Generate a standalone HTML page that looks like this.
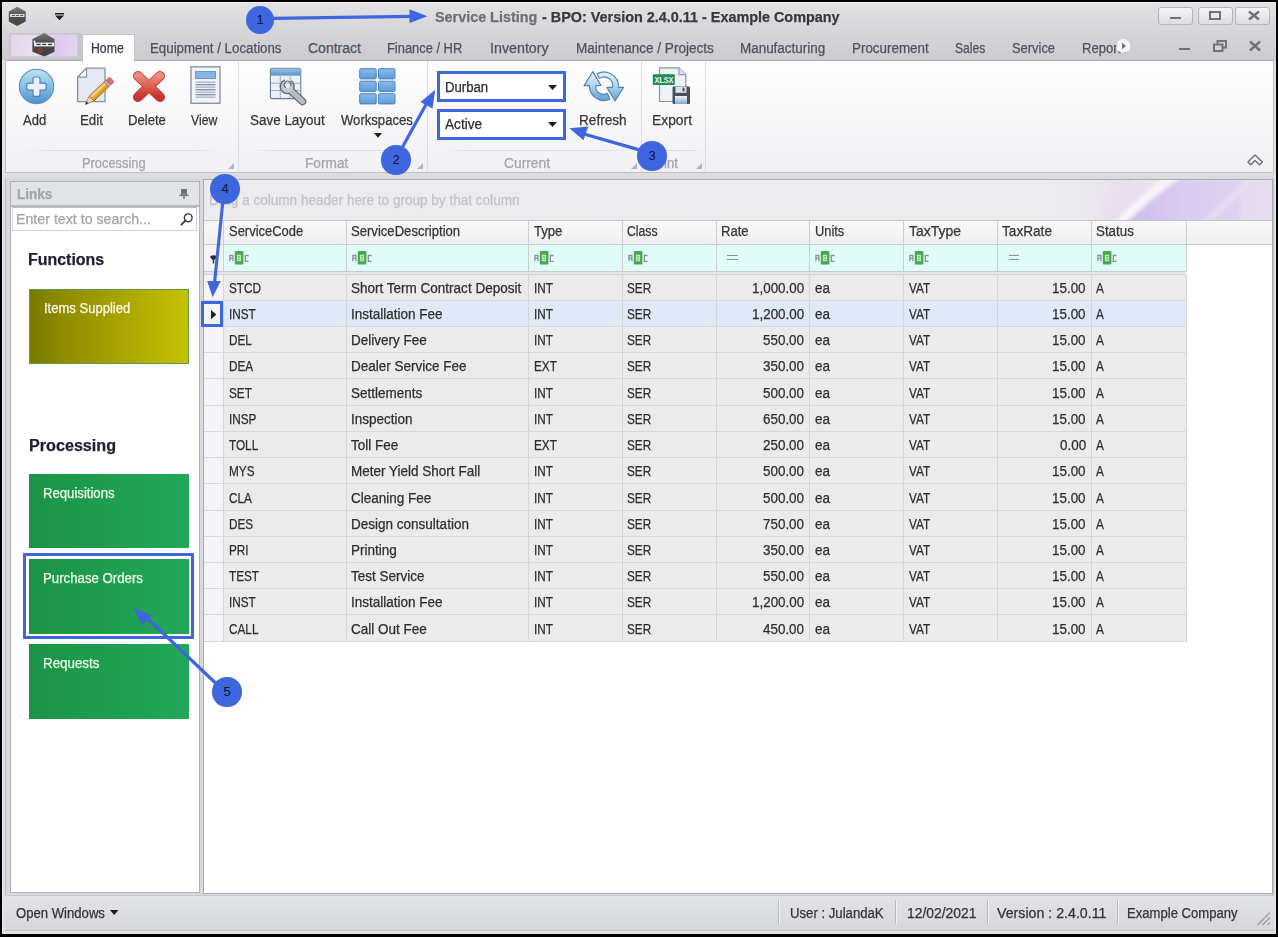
<!DOCTYPE html>
<html><head><meta charset="utf-8">
<style>
*{margin:0;padding:0;box-sizing:border-box}
html,body{width:1278px;height:937px;overflow:hidden;background:#000;font-family:"Liberation Sans",sans-serif;color:#222}
body{position:relative}
.a{position:absolute}
.t{position:absolute;white-space:nowrap;line-height:1;-webkit-text-stroke:0.25px currentColor}
svg{position:absolute;overflow:visible}
.circ{position:absolute;width:29.5px;height:29.5px;border-radius:50%;background:#3e66de;color:#0c0f2e;font-size:13px;text-align:center;line-height:29.5px}
</style></head><body>

<div class="a" style="left:2px;top:2px;width:1274px;height:932px;background:#e1e2e6"></div>
<div class="a" style="left:2px;top:2px;width:1274px;height:1px;background:#eeeef0"></div>
<div class="a" style="left:2px;top:3px;width:1274px;height:57px;background:linear-gradient(#e2e2e5,#d6d6da 50%,#cbcbcf)"></div>
<div class="t" style="left:434.50px;top:9.00px;font-size:15px;font-weight:bold;color:#6d7076;transform:scaleX(0.9579);transform-origin:0 0;">Service Listing</div>
<div class="t" style="left:542.20px;top:9.00px;font-size:15px;font-weight:bold;color:#363944;transform:scaleX(0.9595);transform-origin:0 0;">- BPO: Version 2.4.0.11 - Example Company</div>
<svg style="left:6px;top:4px" width="24" height="26" viewBox="6 4 24 26"><defs><linearGradient id="ghx2" x1="0" y1="0" x2="0" y2="1"><stop offset="0" stop-color="#808082"/><stop offset=".45" stop-color="#505052"/><stop offset="1" stop-color="#434446"/></linearGradient></defs>
<polygon points="17.2,6.7 25.7,11.5 25.7,21.5 17.2,26 8.8,21.5 8.8,11.5" fill="url(#ghx2)"/>
<rect x="10" y="14" width="14.5" height="3" fill="#d8d8d8"/><rect x="12" y="15" width="3" height="1" fill="#555"/><rect x="16" y="15" width="3" height="1" fill="#555"/><rect x="20.2" y="15" width="3" height="1" fill="#555"/>
<rect x="14" y="19" width="4" height="4" fill="#7a3434" opacity=".8"/></svg>
<svg style="left:55px;top:12.5px" width="9" height="8" viewBox="0 0 9 8"><rect x="0" y="0" width="9" height="1.5" fill="#222"/><polygon points="0,2.5 9,2.5 4.5,7.2" fill="#222"/></svg>
<div class="a" style="left:1158px;top:7px;width:35px;height:18px;border:1px solid #b3b5bb;border-radius:3px;background:linear-gradient(#f4f4f6,#dcdde1)"></div>
<div class="a" style="left:1197.5px;top:7px;width:35px;height:18px;border:1px solid #b3b5bb;border-radius:3px;background:linear-gradient(#f4f4f6,#dcdde1)"></div>
<div class="a" style="left:1235px;top:7px;width:35px;height:18px;border:1px solid #b3b5bb;border-radius:3px;background:linear-gradient(#f4f4f6,#dcdde1)"></div>
<div class="a" style="left:1170px;top:17px;width:11px;height:2px;background:#71737a"></div>
<div class="a" style="left:1209px;top:11px;width:12px;height:9px;border:2px solid #71737a;border-top-width:2.5px"></div>
<svg style="left:1247.5px;top:11px" width="12" height="9" viewBox="0 0 12 9"><path d="M1 0.5 L11 8.5 M11 0.5 L1 8.5" stroke="#71737a" stroke-width="2.4"/></svg>
<div class="a" style="left:9px;top:33px;width:73px;height:27px;background:#c6c7cd"></div>
<div class="a" style="left:10px;top:33.5px;width:68px;height:23px;background:linear-gradient(100deg,#e2d6ee,#ecdff2 40%,#e0c8ee 70%,#e6d6f0);border:1px solid #cfc6d8"></div>
<svg style="left:26px;top:30px" width="36" height="30" viewBox="26 30 36 30"><defs><linearGradient id="ghx" x1="0" y1="0" x2="0" y2="1"><stop offset="0" stop-color="#7a7a7c"/><stop offset=".4" stop-color="#4c4c4e"/><stop offset="1" stop-color="#3e3f41"/></linearGradient></defs>
<polygon points="44.4,33 54.5,39 54.5,51.8 44.4,56.6 32.4,51.8 32.4,39" fill="url(#ghx)"/>
<rect x="34" y="42.6" width="20" height="3.8" fill="#f2f2f2"/><rect x="36.5" y="43.8" width="4" height="1.3" fill="#3a3a3a"/><rect x="42.2" y="43.8" width="4" height="1.3" fill="#3a3a3a"/><rect x="48" y="43.8" width="4" height="1.3" fill="#3a3a3a"/><rect x="33.8" y="40.6" width="1.4" height="3" fill="#f2f2f2"/>
<rect x="38" y="48" width="5" height="5" fill="#8a3838" opacity=".85"/></svg>
<div class="t" style="left:150.40px;top:41.05px;font-size:14px;font-weight:normal;color:#4d5261;transform:scaleX(0.9493);transform-origin:0 0;">Equipment / Locations</div>
<div class="t" style="left:308.00px;top:41.05px;font-size:14px;font-weight:normal;color:#4d5261;transform:scaleX(1.0000);transform-origin:0 0;">Contract</div>
<div class="t" style="left:387.00px;top:41.05px;font-size:14px;font-weight:normal;color:#4d5261;transform:scaleX(0.9207);transform-origin:0 0;">Finance / HR</div>
<div class="t" style="left:489.90px;top:41.05px;font-size:14px;font-weight:normal;color:#4d5261;transform:scaleX(1.0190);transform-origin:0 0;">Inventory</div>
<div class="t" style="left:575.80px;top:41.05px;font-size:14px;font-weight:normal;color:#4d5261;transform:scaleX(0.9676);transform-origin:0 0;">Maintenance / Projects</div>
<div class="t" style="left:739.90px;top:41.05px;font-size:14px;font-weight:normal;color:#4d5261;transform:scaleX(0.9596);transform-origin:0 0;">Manufacturing</div>
<div class="t" style="left:852.20px;top:41.05px;font-size:14px;font-weight:normal;color:#4d5261;transform:scaleX(0.9575);transform-origin:0 0;">Procurement</div>
<div class="t" style="left:955.10px;top:41.05px;font-size:14px;font-weight:normal;color:#4d5261;transform:scaleX(0.8629);transform-origin:0 0;">Sales</div>
<div class="t" style="left:1012.00px;top:41.05px;font-size:14px;font-weight:normal;color:#4d5261;transform:scaleX(0.9213);transform-origin:0 0;">Service</div>
<div class="a" style="left:1075px;top:33px;width:58px;height:26px;overflow:hidden"><div class="t" style="left:7.30px;top:8.05px;font-size:14px;font-weight:normal;color:#4d5261;transform:scaleX(0.9300);transform-origin:0 0;">Reports</div></div>
<svg style="left:1116px;top:39px" width="15" height="15" viewBox="0 0 15 15"><circle cx="7.4" cy="7" r="7" fill="#f6f6f8"/><polygon points="6,3.6 10,7 6,10.4" fill="#74767c"/></svg>
<div class="a" style="left:1179px;top:48px;width:11px;height:2.2px;background:#71737a"></div>
<svg style="left:1213px;top:40px" width="14" height="12" viewBox="0 0 14 12"><rect x="4.5" y="1" width="8.5" height="6.5" fill="none" stroke="#71737a" stroke-width="2"/><rect x="1" y="4.5" width="8.5" height="6.5" fill="#d0d1d7" stroke="#71737a" stroke-width="2"/></svg>
<svg style="left:1249px;top:41px" width="12" height="10" viewBox="0 0 12 10"><path d="M1 0.5 L11 9.5 M11 0.5 L1 9.5" stroke="#71737a" stroke-width="2.4"/></svg>
<div class="a" style="left:5px;top:60px;width:1268.5px;height:113px;background:linear-gradient(#fefefe,#f6f6f8 60%,#f1f1f3);border:1px solid #bfc0c6;border-top-color:#a9abb1"></div>
<div class="a" style="left:82px;top:33.5px;width:53px;height:28px;background:linear-gradient(#fdfdfd,#fefefe);border:1px solid #c3c4ca;border-bottom:none"></div>
<div class="t" style="left:90.60px;top:41.05px;font-size:14px;font-weight:normal;color:#353a48;transform:scaleX(0.8763);transform-origin:0 0;">Home</div>
<div class="a" style="left:237.8px;top:61px;width:1px;height:111px;background:#dddee2"></div>
<div class="a" style="left:426.8px;top:61px;width:1px;height:111px;background:#dddee2"></div>
<div class="a" style="left:640.7px;top:61px;width:1px;height:111px;background:#dddee2"></div>
<div class="a" style="left:705.4px;top:61px;width:1px;height:111px;background:#dddee2"></div>
<div class="a" style="left:25px;top:150px;width:197px;height:1px;background:linear-gradient(90deg,rgba(220,221,226,0),#dcdde2 15%,#dcdde2 85%,rgba(220,221,226,0))"></div>
<div class="a" style="left:250px;top:150px;width:162px;height:1px;background:linear-gradient(90deg,rgba(220,221,226,0),#dcdde2 15%,#dcdde2 85%,rgba(220,221,226,0))"></div>
<div class="a" style="left:444px;top:150px;width:186px;height:1px;background:linear-gradient(90deg,rgba(220,221,226,0),#dcdde2 15%,#dcdde2 85%,rgba(220,221,226,0))"></div>
<div class="a" style="left:650px;top:150px;width:50px;height:1px;background:linear-gradient(90deg,rgba(220,221,226,0),#dcdde2 15%,#dcdde2 85%,rgba(220,221,226,0))"></div>
<div class="t" style="left:23.40px;top:113.25px;font-size:14px;font-weight:normal;color:#363636;transform:scaleX(0.9320);transform-origin:0 0;">Add</div>
<div class="t" style="left:80.20px;top:113.25px;font-size:14px;font-weight:normal;color:#363636;transform:scaleX(0.9500);transform-origin:0 0;">Edit</div>
<div class="t" style="left:128.30px;top:113.25px;font-size:14px;font-weight:normal;color:#363636;transform:scaleX(0.9366);transform-origin:0 0;">Delete</div>
<div class="t" style="left:190.70px;top:113.25px;font-size:14px;font-weight:normal;color:#363636;transform:scaleX(0.8742);transform-origin:0 0;">View</div>
<div class="t" style="left:249.60px;top:113.25px;font-size:14px;font-weight:normal;color:#363636;transform:scaleX(0.9603);transform-origin:0 0;">Save Layout</div>
<div class="t" style="left:341.30px;top:113.25px;font-size:14px;font-weight:normal;color:#363636;transform:scaleX(0.9351);transform-origin:0 0;">Workspaces</div>
<div class="t" style="left:579.20px;top:113.25px;font-size:14px;font-weight:normal;color:#363636;transform:scaleX(0.9714);transform-origin:0 0;">Refresh</div>
<div class="t" style="left:651.70px;top:113.25px;font-size:14px;font-weight:normal;color:#363636;transform:scaleX(0.9878);transform-origin:0 0;">Export</div>
<div class="t" style="left:81.70px;top:156.15px;font-size:14px;font-weight:normal;color:#a2a4aa;transform:scaleX(0.9188);transform-origin:0 0;">Processing</div>
<div class="t" style="left:304.70px;top:156.15px;font-size:14px;font-weight:normal;color:#a2a4aa;transform:scaleX(0.9773);transform-origin:0 0;">Format</div>
<div class="t" style="left:503.50px;top:156.15px;font-size:14px;font-weight:normal;color:#a2a4aa;transform:scaleX(0.9872);transform-origin:0 0;">Current</div>
<div class="t" style="left:650.50px;top:156.15px;font-size:14px;font-weight:normal;color:#a2a4aa;transform:scaleX(0.9300);transform-origin:0 0;">Print</div>
<svg style="left:228px;top:163px" width="6" height="6"><polygon points="6,0 6,6 0,6" fill="#b3b5ba"/></svg>
<svg style="left:416.5px;top:163px" width="6" height="6"><polygon points="6,0 6,6 0,6" fill="#b3b5ba"/></svg>
<svg style="left:630.5px;top:163px" width="6" height="6"><polygon points="6,0 6,6 0,6" fill="#b3b5ba"/></svg>
<svg style="left:695.5px;top:163px" width="6" height="6"><polygon points="6,0 6,6 0,6" fill="#b3b5ba"/></svg>
<svg style="left:373.5px;top:132.8px" width="8" height="5"><polygon points="0,0 8,0 4,4.7" fill="#1e1e1e"/></svg>
<svg style="left:1240px;top:148px" width="30" height="22" viewBox="1240 148 30 22"><path d="M1248 162 L1255 155 L1262.3 162 L1259.6 164.8 L1255 160.6 L1250.7 164.8 Z" fill="#f6f6f8" stroke="#6a6c72" stroke-width="1.4" stroke-linejoin="round"/></svg>
<svg style="left:18px;top:68px" width="38" height="38" viewBox="0 0 38 38"><defs><linearGradient id="ga" x1="0" y1="0" x2="0" y2="1"><stop offset="0" stop-color="#bfe2f5"/><stop offset=".45" stop-color="#8cc3e8"/><stop offset="1" stop-color="#4f92cd"/></linearGradient></defs>
<circle cx="18.5" cy="18.5" r="17.2" fill="url(#ga)" stroke="#5b8fbf" stroke-width="1.1"/>
<path d="M15 11 Q15 9 17 9 H20 Q22 9 22 11 V15.2 H26.2 Q28.2 15.2 28.2 17.2 V20.2 Q28.2 22.2 26.2 22.2 H22 V26.4 Q22 28.4 20 28.4 H17 Q15 28.4 15 26.4 V22.2 H10.8 Q8.8 22.2 8.8 20.2 V17.2 Q8.8 15.2 10.8 15.2 H15 Z" fill="#eaf3fb" stroke="#4a83bb" stroke-width="1.2"/></svg>
<svg style="left:70px;top:62px" width="50" height="50" viewBox="70 62 50 50"><path d="M86.5 68.2 H105 V101.6 H77.6 V77.2 Z" fill="#e4e9f2" stroke="#8890a4" stroke-width="1.3" stroke-linejoin="round"/><path d="M77.6 77.2 H86.5 V68.2 Z" fill="#f7f9fc" stroke="#8890a4" stroke-width="1.2" stroke-linejoin="round"/>
<g transform="translate(85.2 104.6) rotate(-43.5)"><polygon points="0,0 9,-3.4 9,3.4" fill="#f1d9ac" stroke="#8a7040" stroke-width=".7"/><polygon points="0,0 3.2,-1.2 3.2,1.2" fill="#2a2a2a"/>
<rect x="9" y="-3.4" width="20.5" height="6.8" fill="#eeb040" stroke="#8f6a1c" stroke-width=".8"/><rect x="9.5" y="-2.6" width="20" height="1.8" fill="#f8d684"/><rect x="9.5" y="1.2" width="20" height="1.5" fill="#d38f1e"/>
<rect x="29.5" y="-3.4" width="2.6" height="6.8" fill="#b9bcc2" stroke="#777" stroke-width=".6"/><rect x="32.1" y="-3.4" width="4.6" height="6.8" rx="1.6" fill="#e27272" stroke="#b24c4c" stroke-width=".7"/></g></svg>
<svg style="left:132px;top:70px" width="34" height="33" viewBox="0 0 34 33"><defs><linearGradient id="gd" x1="0" y1="0" x2="0" y2="1"><stop offset="0" stop-color="#ee8a7e"/><stop offset="1" stop-color="#c9312a"/></linearGradient></defs>
<path d="M6 6 L28 27 M28 6 L6 27" stroke="#b93a33" stroke-width="10" stroke-linecap="round"/><path d="M6 6 L28 27 M28 6 L6 27" stroke="url(#gd)" stroke-width="8" stroke-linecap="round"/></svg>
<svg style="left:189.5px;top:66px" width="31" height="38" viewBox="0 0 31 38"><rect x="1" y="0.8" width="29" height="36.5" fill="#f0f3f8" stroke="#8a93a6" stroke-width="1.4"/><rect x="5.5" y="5.5" width="20" height="7" fill="#86b6e2" stroke="#6f98c8" stroke-width="1"/>
<g stroke-width="1.3"><line x1="5.5" y1="16.2" x2="25.5" y2="16.2" stroke="#a9b1c0"/><line x1="5.5" y1="18.7" x2="25.5" y2="18.7" stroke="#7f8aa0"/><line x1="5.5" y1="21.2" x2="25.5" y2="21.2" stroke="#a9b1c0"/><line x1="5.5" y1="23.7" x2="25.5" y2="23.7" stroke="#7f8aa0"/><line x1="5.5" y1="26.2" x2="25.5" y2="26.2" stroke="#a9b1c0"/><line x1="5.5" y1="28.7" x2="25.5" y2="28.7" stroke="#7f8aa0"/><line x1="5.5" y1="31.2" x2="25.5" y2="31.2" stroke="#a9b1c0"/></g></svg>
<svg style="left:264px;top:62px" width="46" height="46" viewBox="264 62 46 46"><defs><linearGradient id="gsl" x1="0" y1="0" x2="0" y2="1"><stop offset="0" stop-color="#8fc0ec"/><stop offset="1" stop-color="#5a94d0"/></linearGradient><linearGradient id="gwr" x1="0" y1="0" x2="1" y2="1"><stop offset="0" stop-color="#e2e6ea"/><stop offset="1" stop-color="#8b949f"/></linearGradient>
<mask id="mwr" maskUnits="userSpaceOnUse" x="264" y="62" width="46" height="46"><rect x="264" y="62" width="46" height="46" fill="#fff"/><circle cx="287.6" cy="84.6" r="3.4" fill="#000"/><polygon points="285.2,84 290.4,84 292.5,76 284.5,76" fill="#000"/></mask></defs>
<rect x="270.4" y="68.2" width="30.4" height="30.4" rx="2" fill="#eaf0f8" stroke="#6f7b92" stroke-width="1.1"/><rect x="271" y="68.8" width="29.2" height="6.8" fill="url(#gsl)"/>
<g stroke="#9aa6bb" stroke-width=".9"><line x1="280.3" y1="69" x2="280.3" y2="98"/><line x1="290.2" y1="69" x2="290.2" y2="98"/><line x1="271" y1="83.2" x2="300" y2="83.2"/><line x1="271" y1="90.5" x2="300" y2="90.5"/></g>
<g mask="url(#mwr)"><line x1="289.5" y1="89.5" x2="302.5" y2="101.5" stroke="#5d646e" stroke-width="7.6" stroke-linecap="round"/><circle cx="287.2" cy="86.6" r="7.6" fill="#5d646e"/>
<line x1="289.5" y1="89.5" x2="302.5" y2="101.5" stroke="#b6bcc4" stroke-width="5.2" stroke-linecap="round"/><circle cx="287.2" cy="86.6" r="6.3" fill="#c4c9d0"/></g>
<circle cx="287.6" cy="84.6" r="3.4" fill="none" stroke="#5d646e" stroke-width="1.1" stroke-dasharray="15 6" transform="rotate(120 287.6 84.6)"/></svg>
<svg style="left:358.5px;top:67.5px" width="38" height="37" viewBox="0 0 38 37"><defs><linearGradient id="gw" x1="0" y1="0" x2="0" y2="1"><stop offset="0" stop-color="#8cbde9"/><stop offset="1" stop-color="#5d9bd6"/></linearGradient></defs><rect x="0.7" y="0.7" width="16.5" height="10.2" rx="1.2" fill="url(#gw)" stroke="#4a82bf" stroke-width="1"/><rect x="0.7" y="13.2" width="16.5" height="10.2" rx="1.2" fill="url(#gw)" stroke="#4a82bf" stroke-width="1"/><rect x="0.7" y="25.7" width="16.5" height="10.2" rx="1.2" fill="url(#gw)" stroke="#4a82bf" stroke-width="1"/><rect x="19.5" y="0.7" width="16.5" height="10.2" rx="1.2" fill="url(#gw)" stroke="#4a82bf" stroke-width="1"/><rect x="19.5" y="13.2" width="16.5" height="10.2" rx="1.2" fill="url(#gw)" stroke="#4a82bf" stroke-width="1"/><rect x="19.5" y="25.7" width="16.5" height="10.2" rx="1.2" fill="url(#gw)" stroke="#4a82bf" stroke-width="1"/></svg>
<svg style="left:578px;top:64px" width="52" height="44" viewBox="578 64 52 44"><defs><linearGradient id="gr" x1="0" y1="0" x2="0" y2="1"><stop offset="0" stop-color="#e2f2fb"/><stop offset=".45" stop-color="#b3d9f1"/><stop offset="1" stop-color="#5d9fd7"/></linearGradient></defs>
<g fill="url(#gr)" stroke="#587fa6" stroke-width="1.1" stroke-linejoin="round">
<path d="M597.1 73.7 A14.5 14.5 0 0 1 618.4 87.4 L623.6 87.4 L615 101 L606.9 87.4 L612.5 87.4 A8.5 8.5 0 0 0 599.6 78.4 Z"/>
<path d="M589.4 85.6 A14.6 14.6 0 0 0 609.9 99.3 L607.3 93.3 A7.8 7.8 0 0 1 595.8 85.6 L600.9 85.4 L592.8 71.6 L584.1 85.6 Z"/></g></svg>
<svg style="left:652px;top:67px" width="40" height="38" viewBox="0 0 40 38"><path d="M7.5 0.8 H27 L33.8 7.6 V34.5 H7.5 Z" fill="#eef1f6" stroke="#8e97a8" stroke-width="1.2"/><path d="M27 0.8 V7.6 H33.8" fill="#dde2ea" stroke="#8e97a8" stroke-width="1.1"/>
<rect x="0.8" y="7.2" width="22" height="10.8" rx="1" fill="#1d8a58"/><text x="11.8" y="15.6" font-size="8.3" font-family="Liberation Mono" font-weight="bold" fill="#e8f5ee" text-anchor="middle" letter-spacing="-0.3">XLSX</text>
<rect x="20.5" y="19.5" width="17.5" height="17.5" rx="1.2" fill="#48505c"/><rect x="23.5" y="19.8" width="11" height="6" fill="#dde2e8"/><rect x="30.5" y="20.8" width="2" height="3.5" fill="#48505c"/><rect x="23" y="29" width="12" height="8" fill="url(#gfl)"/><defs><linearGradient id="gfl" x1="0" y1="0" x2="0" y2="1"><stop offset="0" stop-color="#f2f4f6"/><stop offset="1" stop-color="#7fa9d3"/></linearGradient></defs></svg>
<div class="a" style="left:436.7px;top:71px;width:129.7px;height:31px;border:3.5px solid #3e66de;background:#fff"></div>
<div class="t" style="left:444.60px;top:79.65px;font-size:14px;font-weight:normal;color:#2b2b2b;transform:scaleX(0.9391);transform-origin:0 0;">Durban</div>
<svg style="left:548px;top:84.5px" width="9" height="6"><polygon points="0,0 9,0 4.5,5" fill="#1e1e1e"/></svg>
<div class="a" style="left:436.7px;top:108.8px;width:129.7px;height:31.500000000000014px;border:3.5px solid #3e66de;background:#fff"></div>
<div class="t" style="left:444.60px;top:117.05px;font-size:14px;font-weight:normal;color:#2b2b2b;transform:scaleX(0.9737);transform-origin:0 0;">Active</div>
<svg style="left:548px;top:122.3px" width="9" height="6"><polygon points="0,0 9,0 4.5,5" fill="#1e1e1e"/></svg>
<div class="a" style="left:5px;top:173px;width:1268.5px;height:4.5px;background:#dcdde1"></div>
<div class="a" style="left:4.5px;top:177.5px;width:1269.5px;height:718px;background:#d8d9de;border-left:1px solid #b9bbc0;border-right:1px solid #c4c5ca"></div>
<div class="a" style="left:9.5px;top:180.5px;width:190px;height:712.5px;background:#fff;border:1px solid #b0b2b8"></div>
<div class="a" style="left:10.5px;top:181.5px;width:188px;height:25px;background:#e2e3e7;border-bottom:2px solid #b9babf"></div>
<div class="t" style="left:16.70px;top:187.05px;font-size:14px;font-weight:bold;color:#a0a4ab;transform:scaleX(0.9649);transform-origin:0 0;">Links</div>
<svg style="left:178.5px;top:189px" width="10" height="10" viewBox="0 0 10 10"><rect x="2" y="0" width="6" height="5.5" fill="#6f7279"/><rect x="0.5" y="5.5" width="9" height="1.6" fill="#6f7279"/><rect x="4.3" y="7" width="1.4" height="3" fill="#6f7279"/></svg>
<div class="a" style="left:11.5px;top:206.5px;width:185.5px;height:24px;background:#fff;border:1px solid #d2d3d7;border-top-color:#b9babf"></div>
<div class="t" style="left:15.60px;top:212.05px;font-size:14px;font-weight:normal;color:#a3a3a5;transform:scaleX(1.0143);transform-origin:0 0;">Enter text to search...</div>
<svg style="left:180px;top:213px" width="13" height="13" viewBox="0 0 13 13"><circle cx="8.2" cy="4.8" r="3.9" fill="none" stroke="#333" stroke-width="1.4"/><line x1="5.4" y1="7.6" x2="0.8" y2="12.2" stroke="#333" stroke-width="1.7"/></svg>
<div class="t" style="left:27.80px;top:252.06px;font-size:16px;font-weight:bold;color:#1b2031;transform:scaleX(0.9974);transform-origin:0 0;">Functions</div>
<div class="t" style="left:28.50px;top:437.66px;font-size:16px;font-weight:bold;color:#1b2031;transform:scaleX(1.0093);transform-origin:0 0;">Processing</div>
<div class="a" style="left:28.6px;top:288.9px;width:160.3px;height:74.7px;background:linear-gradient(90deg,#777a00,#8e8b00 20%,#a29f00 50%,#b8b400 80%,#c6c100);border:1px solid #5c9a50"></div>
<div class="t" style="left:43.50px;top:300.55px;font-size:14px;font-weight:normal;color:#fdfbe6;transform:scaleX(0.9312);transform-origin:0 0;">Items Supplied</div>
<div class="a" style="left:28.6px;top:474px;width:160.3px;height:74.39999999999998px;background:linear-gradient(90deg,#1b9346,#1f9e50 50%,#21a858)"></div>
<div class="t" style="left:43.20px;top:486.05px;font-size:14px;font-weight:normal;color:#effbe8;transform:scaleX(0.9382);transform-origin:0 0;">Requisitions</div>
<div class="a" style="left:28.6px;top:558.8px;width:160.3px;height:75.0px;background:linear-gradient(90deg,#1b9346,#1f9e50 50%,#21a858)"></div>
<div class="t" style="left:43.20px;top:570.65px;font-size:14px;font-weight:normal;color:#effbe8;transform:scaleX(0.9443);transform-origin:0 0;">Purchase Orders</div>
<div class="a" style="left:28.6px;top:644px;width:160.3px;height:74.89999999999998px;background:linear-gradient(90deg,#1b9346,#1f9e50 50%,#21a858)"></div>
<div class="t" style="left:43.20px;top:655.55px;font-size:14px;font-weight:normal;color:#effbe8;transform:scaleX(0.9542);transform-origin:0 0;">Requests</div>
<div class="a" style="left:23.1px;top:553.1px;width:170.6px;height:86.4px;border:3.8px solid #3e66de"></div>
<div class="a" style="left:26.9px;top:556.9px;width:163px;height:78.8px;border:1.8px solid #fff"></div>
<div class="a" style="left:202.5px;top:178.5px;width:1070.5px;height:715.5px;background:#fff;border:1px solid #a8aab0"></div>
<div class="a" style="left:203.5px;top:179.5px;width:1068.5px;height:40.5px;background:#ececee"></div>
<svg style="left:203.5px;top:179.5px;overflow:hidden" width="1068.5" height="40.5" viewBox="203.5 179.5 1068.5 40.5"><defs><filter id="bl" x="-50%" y="-50%" width="200%" height="200%"><feGaussianBlur stdDeviation="2.2"/></filter><filter id="bl2" x="-50%" y="-50%" width="200%" height="200%"><feGaussianBlur stdDeviation="6"/></filter>
<linearGradient id="gp" x1="0" y1="0" x2="1" y2="0"><stop offset="0" stop-color="#ececee" stop-opacity="0"/><stop offset="1" stop-color="#e6d9ee"/></linearGradient>
<linearGradient id="gs" x1="0" y1="0" x2="1" y2="0"><stop offset="0" stop-color="#cdb9ea"/><stop offset=".35" stop-color="#d9caef"/><stop offset="1" stop-color="#e4d9f1"/></linearGradient></defs>
<rect x="1040" y="179" width="90" height="42" fill="url(#gp)" opacity=".8"/>
<polygon points="1095,222 1125,179 1165,179 1135,222" fill="#e9def0" filter="url(#bl2)"/>
<g filter="url(#bl)"><path d="M1112 224 Q1140 195 1165 176 L1182 176 Q1150 198 1124 224 Z" fill="#f7f5f9"/>
<path d="M1124 224 Q1152 196 1182 176 L1280 176 L1280 224 Z" fill="url(#gs)"/>
<path d="M1200 224 Q1225 200 1250 176 L1256 176 Q1232 200 1207 224 Z" fill="#ece4f4" opacity=".8"/>
<rect x="1240" y="176" width="40" height="48" fill="#e8e0f0" opacity=".6"/></g></svg>
<div class="a" style="left:203.5px;top:219.5px;width:1068.5px;height:1px;background:#c4c5ca"></div>
<div class="t" style="left:209.30px;top:193.45px;font-size:14px;font-weight:normal;color:#c1c3c7;transform:scaleX(0.9684);transform-origin:0 0;">Drag a column header here to group by that column</div>
<div class="a" style="left:203.5px;top:220.5px;width:1068.5px;height:23.8px;background:linear-gradient(#f8f8f9,#f0f0f2)"></div>
<div class="a" style="left:203.5px;top:244.3px;width:982.4px;height:1px;background:#c8c9ce"></div>
<div class="a" style="left:1185.9px;top:244.3px;width:86.1px;height:1px;background:#c8c9ce"></div>
<div class="a" style="left:223.4px;top:245.3px;width:962.5px;height:25.5px;background:#e0fbf8"></div>
<div class="a" style="left:203.5px;top:245.3px;width:20px;height:25.5px;background:#f4f4f6"></div>
<div class="a" style="left:203.5px;top:270.6px;width:982.4px;height:1.2px;background:#c8c9ce"></div>
<div class="a" style="left:203.5px;top:271.8px;width:982.4px;height:2.8px;background:#e6e6e8"></div>
<div class="a" style="left:203.5px;top:274.1px;width:982.4px;height:0.8px;background:#d2d3d6"></div>
<div class="a" style="left:223.4px;top:220.5px;width:1px;height:50.5px;background:#cdced3"></div>
<div class="a" style="left:345.5px;top:220.5px;width:1px;height:50.5px;background:#cdced3"></div>
<div class="a" style="left:528.3px;top:220.5px;width:1px;height:50.5px;background:#cdced3"></div>
<div class="a" style="left:621.9px;top:220.5px;width:1px;height:50.5px;background:#cdced3"></div>
<div class="a" style="left:715.5px;top:220.5px;width:1px;height:50.5px;background:#cdced3"></div>
<div class="a" style="left:809.4px;top:220.5px;width:1px;height:50.5px;background:#cdced3"></div>
<div class="a" style="left:903.4px;top:220.5px;width:1px;height:50.5px;background:#cdced3"></div>
<div class="a" style="left:997px;top:220.5px;width:1px;height:50.5px;background:#cdced3"></div>
<div class="a" style="left:1090.6px;top:220.5px;width:1px;height:50.5px;background:#cdced3"></div>
<div class="a" style="left:1185.9px;top:220.5px;width:1px;height:50.5px;background:#cdced3"></div>
<div class="t" style="left:228.70px;top:224.45px;font-size:14px;font-weight:normal;color:#343434;transform:scaleX(0.9250);transform-origin:0 0;">ServiceCode</div>
<div class="t" style="left:350.80px;top:224.45px;font-size:14px;font-weight:normal;color:#343434;transform:scaleX(0.9350);transform-origin:0 0;">ServiceDescription</div>
<div class="t" style="left:533.60px;top:224.45px;font-size:14px;font-weight:normal;color:#343434;transform:scaleX(0.9355);transform-origin:0 0;">Type</div>
<div class="t" style="left:627.20px;top:224.45px;font-size:14px;font-weight:normal;color:#343434;transform:scaleX(0.8743);transform-origin:0 0;">Class</div>
<div class="t" style="left:720.80px;top:224.45px;font-size:14px;font-weight:normal;color:#343434;transform:scaleX(0.9333);transform-origin:0 0;">Rate</div>
<div class="t" style="left:814.70px;top:224.45px;font-size:14px;font-weight:normal;color:#343434;transform:scaleX(0.9156);transform-origin:0 0;">Units</div>
<div class="t" style="left:908.70px;top:224.45px;font-size:14px;font-weight:normal;color:#343434;transform:scaleX(0.9981);transform-origin:0 0;">TaxType</div>
<div class="t" style="left:1002.30px;top:224.45px;font-size:14px;font-weight:normal;color:#343434;transform:scaleX(0.9731);transform-origin:0 0;">TaxRate</div>
<div class="t" style="left:1095.90px;top:224.45px;font-size:14px;font-weight:normal;color:#343434;transform:scaleX(0.9525);transform-origin:0 0;">Status</div>
<svg style="left:209.5px;top:255px" width="7" height="9" viewBox="0 0 7 9"><ellipse cx="3.5" cy="2" rx="3.2" ry="1.8" fill="#2a2a2a"/><path d="M0.6 2.5 L2.8 5 V9 L4.2 8 V5 L6.4 2.5 Z" fill="#2a2a2a"/></svg>
<svg style="left:229.4px;top:251.4px" width="20" height="14" viewBox="0 0 20 14"><path d="M0.9 10.3 V4.5 H3.9 V10.3 M0.9 7.3 H3.9" fill="none" stroke="#8a9098" stroke-width="1.3"/><rect x="5.8" y="0" width="8.6" height="13.5" rx="1" fill="#48a654"/><rect x="7.9" y="3.7" width="4.2" height="6.6" fill="#b2eeb2"/><rect x="9.6" y="5" width=".9" height="1.4" fill="#3a7a44"/><rect x="9.6" y="7.9" width=".9" height="1" fill="#3a7a44"/><path d="M19.6 4.5 H16.3 V10.3 H19.6" fill="none" stroke="#8a9098" stroke-width="1.3"/></svg>
<svg style="left:351.5px;top:251.4px" width="20" height="14" viewBox="0 0 20 14"><path d="M0.9 10.3 V4.5 H3.9 V10.3 M0.9 7.3 H3.9" fill="none" stroke="#8a9098" stroke-width="1.3"/><rect x="5.8" y="0" width="8.6" height="13.5" rx="1" fill="#48a654"/><rect x="7.9" y="3.7" width="4.2" height="6.6" fill="#b2eeb2"/><rect x="9.6" y="5" width=".9" height="1.4" fill="#3a7a44"/><rect x="9.6" y="7.9" width=".9" height="1" fill="#3a7a44"/><path d="M19.6 4.5 H16.3 V10.3 H19.6" fill="none" stroke="#8a9098" stroke-width="1.3"/></svg>
<svg style="left:534.3px;top:251.4px" width="20" height="14" viewBox="0 0 20 14"><path d="M0.9 10.3 V4.5 H3.9 V10.3 M0.9 7.3 H3.9" fill="none" stroke="#8a9098" stroke-width="1.3"/><rect x="5.8" y="0" width="8.6" height="13.5" rx="1" fill="#48a654"/><rect x="7.9" y="3.7" width="4.2" height="6.6" fill="#b2eeb2"/><rect x="9.6" y="5" width=".9" height="1.4" fill="#3a7a44"/><rect x="9.6" y="7.9" width=".9" height="1" fill="#3a7a44"/><path d="M19.6 4.5 H16.3 V10.3 H19.6" fill="none" stroke="#8a9098" stroke-width="1.3"/></svg>
<svg style="left:627.9px;top:251.4px" width="20" height="14" viewBox="0 0 20 14"><path d="M0.9 10.3 V4.5 H3.9 V10.3 M0.9 7.3 H3.9" fill="none" stroke="#8a9098" stroke-width="1.3"/><rect x="5.8" y="0" width="8.6" height="13.5" rx="1" fill="#48a654"/><rect x="7.9" y="3.7" width="4.2" height="6.6" fill="#b2eeb2"/><rect x="9.6" y="5" width=".9" height="1.4" fill="#3a7a44"/><rect x="9.6" y="7.9" width=".9" height="1" fill="#3a7a44"/><path d="M19.6 4.5 H16.3 V10.3 H19.6" fill="none" stroke="#8a9098" stroke-width="1.3"/></svg>
<div class="a" style="left:727.0px;top:255.4px;width:10.6px;height:4.3px;border-top:1.3px solid #8f8f8f;border-bottom:1.3px solid #8f8f8f"></div>
<svg style="left:815.4px;top:251.4px" width="20" height="14" viewBox="0 0 20 14"><path d="M0.9 10.3 V4.5 H3.9 V10.3 M0.9 7.3 H3.9" fill="none" stroke="#8a9098" stroke-width="1.3"/><rect x="5.8" y="0" width="8.6" height="13.5" rx="1" fill="#48a654"/><rect x="7.9" y="3.7" width="4.2" height="6.6" fill="#b2eeb2"/><rect x="9.6" y="5" width=".9" height="1.4" fill="#3a7a44"/><rect x="9.6" y="7.9" width=".9" height="1" fill="#3a7a44"/><path d="M19.6 4.5 H16.3 V10.3 H19.6" fill="none" stroke="#8a9098" stroke-width="1.3"/></svg>
<svg style="left:909.4px;top:251.4px" width="20" height="14" viewBox="0 0 20 14"><path d="M0.9 10.3 V4.5 H3.9 V10.3 M0.9 7.3 H3.9" fill="none" stroke="#8a9098" stroke-width="1.3"/><rect x="5.8" y="0" width="8.6" height="13.5" rx="1" fill="#48a654"/><rect x="7.9" y="3.7" width="4.2" height="6.6" fill="#b2eeb2"/><rect x="9.6" y="5" width=".9" height="1.4" fill="#3a7a44"/><rect x="9.6" y="7.9" width=".9" height="1" fill="#3a7a44"/><path d="M19.6 4.5 H16.3 V10.3 H19.6" fill="none" stroke="#8a9098" stroke-width="1.3"/></svg>
<div class="a" style="left:1008.5px;top:255.4px;width:10.6px;height:4.3px;border-top:1.3px solid #8f8f8f;border-bottom:1.3px solid #8f8f8f"></div>
<svg style="left:1096.6px;top:251.4px" width="20" height="14" viewBox="0 0 20 14"><path d="M0.9 10.3 V4.5 H3.9 V10.3 M0.9 7.3 H3.9" fill="none" stroke="#8a9098" stroke-width="1.3"/><rect x="5.8" y="0" width="8.6" height="13.5" rx="1" fill="#48a654"/><rect x="7.9" y="3.7" width="4.2" height="6.6" fill="#b2eeb2"/><rect x="9.6" y="5" width=".9" height="1.4" fill="#3a7a44"/><rect x="9.6" y="7.9" width=".9" height="1" fill="#3a7a44"/><path d="M19.6 4.5 H16.3 V10.3 H19.6" fill="none" stroke="#8a9098" stroke-width="1.3"/></svg>
<div class="a" style="left:223.4px;top:274.6px;width:962.5px;height:26.22px;background:#ebebec"></div>
<div class="a" style="left:203.5px;top:274.6px;width:19.9px;height:26.22px;background:#f4f4f6"></div>
<div class="a" style="left:203.5px;top:299.82000000000005px;width:982.4px;height:1px;background:#d7d8db"></div>
<div class="t" style="left:228.70px;top:280.75px;font-size:14px;font-weight:normal;color:#2e2e2e;transform:scaleX(0.8400);transform-origin:0 0;">STCD</div>
<div class="t" style="left:350.80px;top:280.75px;font-size:14px;font-weight:normal;color:#2e2e2e;transform:scaleX(0.9650);transform-origin:0 0;">Short Term Contract Deposit</div>
<div class="t" style="left:533.60px;top:280.75px;font-size:14px;font-weight:normal;color:#2e2e2e;transform:scaleX(0.8400);transform-origin:0 0;">INT</div>
<div class="t" style="left:627.20px;top:280.75px;font-size:14px;font-weight:normal;color:#2e2e2e;transform:scaleX(0.8400);transform-origin:0 0;">SER</div>
<div class="t" style="left:751.51px;top:280.75px;font-size:14px;font-weight:normal;color:#2e2e2e;transform:scaleX(0.9580);transform-origin:0 0;">1,000.00</div>
<div class="t" style="left:814.70px;top:280.75px;font-size:14px;font-weight:normal;color:#2e2e2e;transform:scaleX(0.9650);transform-origin:0 0;">ea</div>
<div class="t" style="left:908.70px;top:280.75px;font-size:14px;font-weight:normal;color:#2e2e2e;transform:scaleX(0.8400);transform-origin:0 0;">VAT</div>
<div class="t" style="left:1051.87px;top:280.75px;font-size:14px;font-weight:normal;color:#2e2e2e;transform:scaleX(0.9580);transform-origin:0 0;">15.00</div>
<div class="t" style="left:1095.90px;top:280.75px;font-size:14px;font-weight:normal;color:#2e2e2e;transform:scaleX(0.8400);transform-origin:0 0;">A</div>
<div class="a" style="left:223.4px;top:300.82000000000005px;width:962.5px;height:26.22px;background:#dfe9f7"></div>
<div class="a" style="left:203.5px;top:300.82000000000005px;width:19.9px;height:26.22px;background:#f4f4f6"></div>
<div class="a" style="left:203.5px;top:326.0400000000001px;width:982.4px;height:1px;background:#d7d8db"></div>
<div class="t" style="left:228.70px;top:306.97px;font-size:14px;font-weight:normal;color:#2e2e2e;transform:scaleX(0.8400);transform-origin:0 0;">INST</div>
<div class="t" style="left:350.80px;top:306.97px;font-size:14px;font-weight:normal;color:#2e2e2e;transform:scaleX(0.9650);transform-origin:0 0;">Installation Fee</div>
<div class="t" style="left:533.60px;top:306.97px;font-size:14px;font-weight:normal;color:#2e2e2e;transform:scaleX(0.8400);transform-origin:0 0;">INT</div>
<div class="t" style="left:627.20px;top:306.97px;font-size:14px;font-weight:normal;color:#2e2e2e;transform:scaleX(0.8400);transform-origin:0 0;">SER</div>
<div class="t" style="left:751.51px;top:306.97px;font-size:14px;font-weight:normal;color:#2e2e2e;transform:scaleX(0.9580);transform-origin:0 0;">1,200.00</div>
<div class="t" style="left:814.70px;top:306.97px;font-size:14px;font-weight:normal;color:#2e2e2e;transform:scaleX(0.9650);transform-origin:0 0;">ea</div>
<div class="t" style="left:908.70px;top:306.97px;font-size:14px;font-weight:normal;color:#2e2e2e;transform:scaleX(0.8400);transform-origin:0 0;">VAT</div>
<div class="t" style="left:1051.87px;top:306.97px;font-size:14px;font-weight:normal;color:#2e2e2e;transform:scaleX(0.9580);transform-origin:0 0;">15.00</div>
<div class="t" style="left:1095.90px;top:306.97px;font-size:14px;font-weight:normal;color:#2e2e2e;transform:scaleX(0.8400);transform-origin:0 0;">A</div>
<div class="a" style="left:223.4px;top:327.04px;width:962.5px;height:26.22px;background:#ebebec"></div>
<div class="a" style="left:203.5px;top:327.04px;width:19.9px;height:26.22px;background:#f4f4f6"></div>
<div class="a" style="left:203.5px;top:352.26px;width:982.4px;height:1px;background:#d7d8db"></div>
<div class="t" style="left:228.70px;top:333.19px;font-size:14px;font-weight:normal;color:#2e2e2e;transform:scaleX(0.8400);transform-origin:0 0;">DEL</div>
<div class="t" style="left:350.80px;top:333.19px;font-size:14px;font-weight:normal;color:#2e2e2e;transform:scaleX(0.9650);transform-origin:0 0;">Delivery Fee</div>
<div class="t" style="left:533.60px;top:333.19px;font-size:14px;font-weight:normal;color:#2e2e2e;transform:scaleX(0.8400);transform-origin:0 0;">INT</div>
<div class="t" style="left:627.20px;top:333.19px;font-size:14px;font-weight:normal;color:#2e2e2e;transform:scaleX(0.8400);transform-origin:0 0;">SER</div>
<div class="t" style="left:763.01px;top:333.19px;font-size:14px;font-weight:normal;color:#2e2e2e;transform:scaleX(0.9580);transform-origin:0 0;">550.00</div>
<div class="t" style="left:814.70px;top:333.19px;font-size:14px;font-weight:normal;color:#2e2e2e;transform:scaleX(0.9650);transform-origin:0 0;">ea</div>
<div class="t" style="left:908.70px;top:333.19px;font-size:14px;font-weight:normal;color:#2e2e2e;transform:scaleX(0.8400);transform-origin:0 0;">VAT</div>
<div class="t" style="left:1051.87px;top:333.19px;font-size:14px;font-weight:normal;color:#2e2e2e;transform:scaleX(0.9580);transform-origin:0 0;">15.00</div>
<div class="t" style="left:1095.90px;top:333.19px;font-size:14px;font-weight:normal;color:#2e2e2e;transform:scaleX(0.8400);transform-origin:0 0;">A</div>
<div class="a" style="left:223.4px;top:353.26px;width:962.5px;height:26.22px;background:#ebebec"></div>
<div class="a" style="left:203.5px;top:353.26px;width:19.9px;height:26.22px;background:#f4f4f6"></div>
<div class="a" style="left:203.5px;top:378.48px;width:982.4px;height:1px;background:#d7d8db"></div>
<div class="t" style="left:228.70px;top:359.41px;font-size:14px;font-weight:normal;color:#2e2e2e;transform:scaleX(0.8400);transform-origin:0 0;">DEA</div>
<div class="t" style="left:350.80px;top:359.41px;font-size:14px;font-weight:normal;color:#2e2e2e;transform:scaleX(0.9650);transform-origin:0 0;">Dealer Service Fee</div>
<div class="t" style="left:533.60px;top:359.41px;font-size:14px;font-weight:normal;color:#2e2e2e;transform:scaleX(0.8400);transform-origin:0 0;">EXT</div>
<div class="t" style="left:627.20px;top:359.41px;font-size:14px;font-weight:normal;color:#2e2e2e;transform:scaleX(0.8400);transform-origin:0 0;">SER</div>
<div class="t" style="left:763.01px;top:359.41px;font-size:14px;font-weight:normal;color:#2e2e2e;transform:scaleX(0.9580);transform-origin:0 0;">350.00</div>
<div class="t" style="left:814.70px;top:359.41px;font-size:14px;font-weight:normal;color:#2e2e2e;transform:scaleX(0.9650);transform-origin:0 0;">ea</div>
<div class="t" style="left:908.70px;top:359.41px;font-size:14px;font-weight:normal;color:#2e2e2e;transform:scaleX(0.8400);transform-origin:0 0;">VAT</div>
<div class="t" style="left:1051.87px;top:359.41px;font-size:14px;font-weight:normal;color:#2e2e2e;transform:scaleX(0.9580);transform-origin:0 0;">15.00</div>
<div class="t" style="left:1095.90px;top:359.41px;font-size:14px;font-weight:normal;color:#2e2e2e;transform:scaleX(0.8400);transform-origin:0 0;">A</div>
<div class="a" style="left:223.4px;top:379.48px;width:962.5px;height:26.22px;background:#ebebec"></div>
<div class="a" style="left:203.5px;top:379.48px;width:19.9px;height:26.22px;background:#f4f4f6"></div>
<div class="a" style="left:203.5px;top:404.70000000000005px;width:982.4px;height:1px;background:#d7d8db"></div>
<div class="t" style="left:228.70px;top:385.63px;font-size:14px;font-weight:normal;color:#2e2e2e;transform:scaleX(0.8400);transform-origin:0 0;">SET</div>
<div class="t" style="left:350.80px;top:385.63px;font-size:14px;font-weight:normal;color:#2e2e2e;transform:scaleX(0.9650);transform-origin:0 0;">Settlements</div>
<div class="t" style="left:533.60px;top:385.63px;font-size:14px;font-weight:normal;color:#2e2e2e;transform:scaleX(0.8400);transform-origin:0 0;">INT</div>
<div class="t" style="left:627.20px;top:385.63px;font-size:14px;font-weight:normal;color:#2e2e2e;transform:scaleX(0.8400);transform-origin:0 0;">SER</div>
<div class="t" style="left:763.01px;top:385.63px;font-size:14px;font-weight:normal;color:#2e2e2e;transform:scaleX(0.9580);transform-origin:0 0;">500.00</div>
<div class="t" style="left:814.70px;top:385.63px;font-size:14px;font-weight:normal;color:#2e2e2e;transform:scaleX(0.9650);transform-origin:0 0;">ea</div>
<div class="t" style="left:908.70px;top:385.63px;font-size:14px;font-weight:normal;color:#2e2e2e;transform:scaleX(0.8400);transform-origin:0 0;">VAT</div>
<div class="t" style="left:1051.87px;top:385.63px;font-size:14px;font-weight:normal;color:#2e2e2e;transform:scaleX(0.9580);transform-origin:0 0;">15.00</div>
<div class="t" style="left:1095.90px;top:385.63px;font-size:14px;font-weight:normal;color:#2e2e2e;transform:scaleX(0.8400);transform-origin:0 0;">A</div>
<div class="a" style="left:223.4px;top:405.70000000000005px;width:962.5px;height:26.22px;background:#ebebec"></div>
<div class="a" style="left:203.5px;top:405.70000000000005px;width:19.9px;height:26.22px;background:#f4f4f6"></div>
<div class="a" style="left:203.5px;top:430.9200000000001px;width:982.4px;height:1px;background:#d7d8db"></div>
<div class="t" style="left:228.70px;top:411.85px;font-size:14px;font-weight:normal;color:#2e2e2e;transform:scaleX(0.8400);transform-origin:0 0;">INSP</div>
<div class="t" style="left:350.80px;top:411.85px;font-size:14px;font-weight:normal;color:#2e2e2e;transform:scaleX(0.9650);transform-origin:0 0;">Inspection</div>
<div class="t" style="left:533.60px;top:411.85px;font-size:14px;font-weight:normal;color:#2e2e2e;transform:scaleX(0.8400);transform-origin:0 0;">INT</div>
<div class="t" style="left:627.20px;top:411.85px;font-size:14px;font-weight:normal;color:#2e2e2e;transform:scaleX(0.8400);transform-origin:0 0;">SER</div>
<div class="t" style="left:763.01px;top:411.85px;font-size:14px;font-weight:normal;color:#2e2e2e;transform:scaleX(0.9580);transform-origin:0 0;">650.00</div>
<div class="t" style="left:814.70px;top:411.85px;font-size:14px;font-weight:normal;color:#2e2e2e;transform:scaleX(0.9650);transform-origin:0 0;">ea</div>
<div class="t" style="left:908.70px;top:411.85px;font-size:14px;font-weight:normal;color:#2e2e2e;transform:scaleX(0.8400);transform-origin:0 0;">VAT</div>
<div class="t" style="left:1051.87px;top:411.85px;font-size:14px;font-weight:normal;color:#2e2e2e;transform:scaleX(0.9580);transform-origin:0 0;">15.00</div>
<div class="t" style="left:1095.90px;top:411.85px;font-size:14px;font-weight:normal;color:#2e2e2e;transform:scaleX(0.8400);transform-origin:0 0;">A</div>
<div class="a" style="left:223.4px;top:431.92px;width:962.5px;height:26.22px;background:#ebebec"></div>
<div class="a" style="left:203.5px;top:431.92px;width:19.9px;height:26.22px;background:#f4f4f6"></div>
<div class="a" style="left:203.5px;top:457.14px;width:982.4px;height:1px;background:#d7d8db"></div>
<div class="t" style="left:228.70px;top:438.07px;font-size:14px;font-weight:normal;color:#2e2e2e;transform:scaleX(0.8400);transform-origin:0 0;">TOLL</div>
<div class="t" style="left:350.80px;top:438.07px;font-size:14px;font-weight:normal;color:#2e2e2e;transform:scaleX(0.9650);transform-origin:0 0;">Toll Fee</div>
<div class="t" style="left:533.60px;top:438.07px;font-size:14px;font-weight:normal;color:#2e2e2e;transform:scaleX(0.8400);transform-origin:0 0;">EXT</div>
<div class="t" style="left:627.20px;top:438.07px;font-size:14px;font-weight:normal;color:#2e2e2e;transform:scaleX(0.8400);transform-origin:0 0;">SER</div>
<div class="t" style="left:763.01px;top:438.07px;font-size:14px;font-weight:normal;color:#2e2e2e;transform:scaleX(0.9580);transform-origin:0 0;">250.00</div>
<div class="t" style="left:814.70px;top:438.07px;font-size:14px;font-weight:normal;color:#2e2e2e;transform:scaleX(0.9650);transform-origin:0 0;">ea</div>
<div class="t" style="left:908.70px;top:438.07px;font-size:14px;font-weight:normal;color:#2e2e2e;transform:scaleX(0.8400);transform-origin:0 0;">VAT</div>
<div class="t" style="left:1059.53px;top:438.07px;font-size:14px;font-weight:normal;color:#2e2e2e;transform:scaleX(0.9580);transform-origin:0 0;">0.00</div>
<div class="t" style="left:1095.90px;top:438.07px;font-size:14px;font-weight:normal;color:#2e2e2e;transform:scaleX(0.8400);transform-origin:0 0;">A</div>
<div class="a" style="left:223.4px;top:458.14px;width:962.5px;height:26.22px;background:#ebebec"></div>
<div class="a" style="left:203.5px;top:458.14px;width:19.9px;height:26.22px;background:#f4f4f6"></div>
<div class="a" style="left:203.5px;top:483.36px;width:982.4px;height:1px;background:#d7d8db"></div>
<div class="t" style="left:228.70px;top:464.29px;font-size:14px;font-weight:normal;color:#2e2e2e;transform:scaleX(0.8400);transform-origin:0 0;">MYS</div>
<div class="t" style="left:350.80px;top:464.29px;font-size:14px;font-weight:normal;color:#2e2e2e;transform:scaleX(0.9650);transform-origin:0 0;">Meter Yield Short Fall</div>
<div class="t" style="left:533.60px;top:464.29px;font-size:14px;font-weight:normal;color:#2e2e2e;transform:scaleX(0.8400);transform-origin:0 0;">INT</div>
<div class="t" style="left:627.20px;top:464.29px;font-size:14px;font-weight:normal;color:#2e2e2e;transform:scaleX(0.8400);transform-origin:0 0;">SER</div>
<div class="t" style="left:763.01px;top:464.29px;font-size:14px;font-weight:normal;color:#2e2e2e;transform:scaleX(0.9580);transform-origin:0 0;">500.00</div>
<div class="t" style="left:814.70px;top:464.29px;font-size:14px;font-weight:normal;color:#2e2e2e;transform:scaleX(0.9650);transform-origin:0 0;">ea</div>
<div class="t" style="left:908.70px;top:464.29px;font-size:14px;font-weight:normal;color:#2e2e2e;transform:scaleX(0.8400);transform-origin:0 0;">VAT</div>
<div class="t" style="left:1051.87px;top:464.29px;font-size:14px;font-weight:normal;color:#2e2e2e;transform:scaleX(0.9580);transform-origin:0 0;">15.00</div>
<div class="t" style="left:1095.90px;top:464.29px;font-size:14px;font-weight:normal;color:#2e2e2e;transform:scaleX(0.8400);transform-origin:0 0;">A</div>
<div class="a" style="left:223.4px;top:484.36px;width:962.5px;height:26.22px;background:#ebebec"></div>
<div class="a" style="left:203.5px;top:484.36px;width:19.9px;height:26.22px;background:#f4f4f6"></div>
<div class="a" style="left:203.5px;top:509.58000000000004px;width:982.4px;height:1px;background:#d7d8db"></div>
<div class="t" style="left:228.70px;top:490.51px;font-size:14px;font-weight:normal;color:#2e2e2e;transform:scaleX(0.8400);transform-origin:0 0;">CLA</div>
<div class="t" style="left:350.80px;top:490.51px;font-size:14px;font-weight:normal;color:#2e2e2e;transform:scaleX(0.9650);transform-origin:0 0;">Cleaning Fee</div>
<div class="t" style="left:533.60px;top:490.51px;font-size:14px;font-weight:normal;color:#2e2e2e;transform:scaleX(0.8400);transform-origin:0 0;">INT</div>
<div class="t" style="left:627.20px;top:490.51px;font-size:14px;font-weight:normal;color:#2e2e2e;transform:scaleX(0.8400);transform-origin:0 0;">SER</div>
<div class="t" style="left:763.01px;top:490.51px;font-size:14px;font-weight:normal;color:#2e2e2e;transform:scaleX(0.9580);transform-origin:0 0;">500.00</div>
<div class="t" style="left:814.70px;top:490.51px;font-size:14px;font-weight:normal;color:#2e2e2e;transform:scaleX(0.9650);transform-origin:0 0;">ea</div>
<div class="t" style="left:908.70px;top:490.51px;font-size:14px;font-weight:normal;color:#2e2e2e;transform:scaleX(0.8400);transform-origin:0 0;">VAT</div>
<div class="t" style="left:1051.87px;top:490.51px;font-size:14px;font-weight:normal;color:#2e2e2e;transform:scaleX(0.9580);transform-origin:0 0;">15.00</div>
<div class="t" style="left:1095.90px;top:490.51px;font-size:14px;font-weight:normal;color:#2e2e2e;transform:scaleX(0.8400);transform-origin:0 0;">A</div>
<div class="a" style="left:223.4px;top:510.58000000000004px;width:962.5px;height:26.22px;background:#ebebec"></div>
<div class="a" style="left:203.5px;top:510.58000000000004px;width:19.9px;height:26.22px;background:#f4f4f6"></div>
<div class="a" style="left:203.5px;top:535.8000000000001px;width:982.4px;height:1px;background:#d7d8db"></div>
<div class="t" style="left:228.70px;top:516.73px;font-size:14px;font-weight:normal;color:#2e2e2e;transform:scaleX(0.8400);transform-origin:0 0;">DES</div>
<div class="t" style="left:350.80px;top:516.73px;font-size:14px;font-weight:normal;color:#2e2e2e;transform:scaleX(0.9650);transform-origin:0 0;">Design consultation</div>
<div class="t" style="left:533.60px;top:516.73px;font-size:14px;font-weight:normal;color:#2e2e2e;transform:scaleX(0.8400);transform-origin:0 0;">INT</div>
<div class="t" style="left:627.20px;top:516.73px;font-size:14px;font-weight:normal;color:#2e2e2e;transform:scaleX(0.8400);transform-origin:0 0;">SER</div>
<div class="t" style="left:763.01px;top:516.73px;font-size:14px;font-weight:normal;color:#2e2e2e;transform:scaleX(0.9580);transform-origin:0 0;">750.00</div>
<div class="t" style="left:814.70px;top:516.73px;font-size:14px;font-weight:normal;color:#2e2e2e;transform:scaleX(0.9650);transform-origin:0 0;">ea</div>
<div class="t" style="left:908.70px;top:516.73px;font-size:14px;font-weight:normal;color:#2e2e2e;transform:scaleX(0.8400);transform-origin:0 0;">VAT</div>
<div class="t" style="left:1051.87px;top:516.73px;font-size:14px;font-weight:normal;color:#2e2e2e;transform:scaleX(0.9580);transform-origin:0 0;">15.00</div>
<div class="t" style="left:1095.90px;top:516.73px;font-size:14px;font-weight:normal;color:#2e2e2e;transform:scaleX(0.8400);transform-origin:0 0;">A</div>
<div class="a" style="left:223.4px;top:536.8px;width:962.5px;height:26.22px;background:#ebebec"></div>
<div class="a" style="left:203.5px;top:536.8px;width:19.9px;height:26.22px;background:#f4f4f6"></div>
<div class="a" style="left:203.5px;top:562.02px;width:982.4px;height:1px;background:#d7d8db"></div>
<div class="t" style="left:228.70px;top:542.95px;font-size:14px;font-weight:normal;color:#2e2e2e;transform:scaleX(0.8400);transform-origin:0 0;">PRI</div>
<div class="t" style="left:350.80px;top:542.95px;font-size:14px;font-weight:normal;color:#2e2e2e;transform:scaleX(0.9650);transform-origin:0 0;">Printing</div>
<div class="t" style="left:533.60px;top:542.95px;font-size:14px;font-weight:normal;color:#2e2e2e;transform:scaleX(0.8400);transform-origin:0 0;">INT</div>
<div class="t" style="left:627.20px;top:542.95px;font-size:14px;font-weight:normal;color:#2e2e2e;transform:scaleX(0.8400);transform-origin:0 0;">SER</div>
<div class="t" style="left:763.01px;top:542.95px;font-size:14px;font-weight:normal;color:#2e2e2e;transform:scaleX(0.9580);transform-origin:0 0;">350.00</div>
<div class="t" style="left:814.70px;top:542.95px;font-size:14px;font-weight:normal;color:#2e2e2e;transform:scaleX(0.9650);transform-origin:0 0;">ea</div>
<div class="t" style="left:908.70px;top:542.95px;font-size:14px;font-weight:normal;color:#2e2e2e;transform:scaleX(0.8400);transform-origin:0 0;">VAT</div>
<div class="t" style="left:1051.87px;top:542.95px;font-size:14px;font-weight:normal;color:#2e2e2e;transform:scaleX(0.9580);transform-origin:0 0;">15.00</div>
<div class="t" style="left:1095.90px;top:542.95px;font-size:14px;font-weight:normal;color:#2e2e2e;transform:scaleX(0.8400);transform-origin:0 0;">A</div>
<div class="a" style="left:223.4px;top:563.02px;width:962.5px;height:26.22px;background:#ebebec"></div>
<div class="a" style="left:203.5px;top:563.02px;width:19.9px;height:26.22px;background:#f4f4f6"></div>
<div class="a" style="left:203.5px;top:588.24px;width:982.4px;height:1px;background:#d7d8db"></div>
<div class="t" style="left:228.70px;top:569.17px;font-size:14px;font-weight:normal;color:#2e2e2e;transform:scaleX(0.8400);transform-origin:0 0;">TEST</div>
<div class="t" style="left:350.80px;top:569.17px;font-size:14px;font-weight:normal;color:#2e2e2e;transform:scaleX(0.9650);transform-origin:0 0;">Test Service</div>
<div class="t" style="left:533.60px;top:569.17px;font-size:14px;font-weight:normal;color:#2e2e2e;transform:scaleX(0.8400);transform-origin:0 0;">INT</div>
<div class="t" style="left:627.20px;top:569.17px;font-size:14px;font-weight:normal;color:#2e2e2e;transform:scaleX(0.8400);transform-origin:0 0;">SER</div>
<div class="t" style="left:763.01px;top:569.17px;font-size:14px;font-weight:normal;color:#2e2e2e;transform:scaleX(0.9580);transform-origin:0 0;">550.00</div>
<div class="t" style="left:814.70px;top:569.17px;font-size:14px;font-weight:normal;color:#2e2e2e;transform:scaleX(0.9650);transform-origin:0 0;">ea</div>
<div class="t" style="left:908.70px;top:569.17px;font-size:14px;font-weight:normal;color:#2e2e2e;transform:scaleX(0.8400);transform-origin:0 0;">VAT</div>
<div class="t" style="left:1051.87px;top:569.17px;font-size:14px;font-weight:normal;color:#2e2e2e;transform:scaleX(0.9580);transform-origin:0 0;">15.00</div>
<div class="t" style="left:1095.90px;top:569.17px;font-size:14px;font-weight:normal;color:#2e2e2e;transform:scaleX(0.8400);transform-origin:0 0;">A</div>
<div class="a" style="left:223.4px;top:589.24px;width:962.5px;height:26.22px;background:#ebebec"></div>
<div class="a" style="left:203.5px;top:589.24px;width:19.9px;height:26.22px;background:#f4f4f6"></div>
<div class="a" style="left:203.5px;top:614.46px;width:982.4px;height:1px;background:#d7d8db"></div>
<div class="t" style="left:228.70px;top:595.39px;font-size:14px;font-weight:normal;color:#2e2e2e;transform:scaleX(0.8400);transform-origin:0 0;">INST</div>
<div class="t" style="left:350.80px;top:595.39px;font-size:14px;font-weight:normal;color:#2e2e2e;transform:scaleX(0.9650);transform-origin:0 0;">Installation Fee</div>
<div class="t" style="left:533.60px;top:595.39px;font-size:14px;font-weight:normal;color:#2e2e2e;transform:scaleX(0.8400);transform-origin:0 0;">INT</div>
<div class="t" style="left:627.20px;top:595.39px;font-size:14px;font-weight:normal;color:#2e2e2e;transform:scaleX(0.8400);transform-origin:0 0;">SER</div>
<div class="t" style="left:751.51px;top:595.39px;font-size:14px;font-weight:normal;color:#2e2e2e;transform:scaleX(0.9580);transform-origin:0 0;">1,200.00</div>
<div class="t" style="left:814.70px;top:595.39px;font-size:14px;font-weight:normal;color:#2e2e2e;transform:scaleX(0.9650);transform-origin:0 0;">ea</div>
<div class="t" style="left:908.70px;top:595.39px;font-size:14px;font-weight:normal;color:#2e2e2e;transform:scaleX(0.8400);transform-origin:0 0;">VAT</div>
<div class="t" style="left:1051.87px;top:595.39px;font-size:14px;font-weight:normal;color:#2e2e2e;transform:scaleX(0.9580);transform-origin:0 0;">15.00</div>
<div class="t" style="left:1095.90px;top:595.39px;font-size:14px;font-weight:normal;color:#2e2e2e;transform:scaleX(0.8400);transform-origin:0 0;">A</div>
<div class="a" style="left:223.4px;top:615.46px;width:962.5px;height:26.22px;background:#ebebec"></div>
<div class="a" style="left:203.5px;top:615.46px;width:19.9px;height:26.22px;background:#f4f4f6"></div>
<div class="a" style="left:203.5px;top:640.6800000000001px;width:982.4px;height:1px;background:#d7d8db"></div>
<div class="t" style="left:228.70px;top:621.61px;font-size:14px;font-weight:normal;color:#2e2e2e;transform:scaleX(0.8400);transform-origin:0 0;">CALL</div>
<div class="t" style="left:350.80px;top:621.61px;font-size:14px;font-weight:normal;color:#2e2e2e;transform:scaleX(0.9650);transform-origin:0 0;">Call Out Fee</div>
<div class="t" style="left:533.60px;top:621.61px;font-size:14px;font-weight:normal;color:#2e2e2e;transform:scaleX(0.8400);transform-origin:0 0;">INT</div>
<div class="t" style="left:627.20px;top:621.61px;font-size:14px;font-weight:normal;color:#2e2e2e;transform:scaleX(0.8400);transform-origin:0 0;">SER</div>
<div class="t" style="left:763.01px;top:621.61px;font-size:14px;font-weight:normal;color:#2e2e2e;transform:scaleX(0.9580);transform-origin:0 0;">450.00</div>
<div class="t" style="left:814.70px;top:621.61px;font-size:14px;font-weight:normal;color:#2e2e2e;transform:scaleX(0.9650);transform-origin:0 0;">ea</div>
<div class="t" style="left:908.70px;top:621.61px;font-size:14px;font-weight:normal;color:#2e2e2e;transform:scaleX(0.8400);transform-origin:0 0;">VAT</div>
<div class="t" style="left:1051.87px;top:621.61px;font-size:14px;font-weight:normal;color:#2e2e2e;transform:scaleX(0.9580);transform-origin:0 0;">15.00</div>
<div class="t" style="left:1095.90px;top:621.61px;font-size:14px;font-weight:normal;color:#2e2e2e;transform:scaleX(0.8400);transform-origin:0 0;">A</div>
<div class="a" style="left:223.4px;top:274.6px;width:1px;height:367.08px;background:#d5d6d9"></div>
<div class="a" style="left:345.5px;top:274.6px;width:1px;height:367.08px;background:#d5d6d9"></div>
<div class="a" style="left:528.3px;top:274.6px;width:1px;height:367.08px;background:#d5d6d9"></div>
<div class="a" style="left:621.9px;top:274.6px;width:1px;height:367.08px;background:#d5d6d9"></div>
<div class="a" style="left:715.5px;top:274.6px;width:1px;height:367.08px;background:#d5d6d9"></div>
<div class="a" style="left:809.4px;top:274.6px;width:1px;height:367.08px;background:#d5d6d9"></div>
<div class="a" style="left:903.4px;top:274.6px;width:1px;height:367.08px;background:#d5d6d9"></div>
<div class="a" style="left:997px;top:274.6px;width:1px;height:367.08px;background:#d5d6d9"></div>
<div class="a" style="left:1090.6px;top:274.6px;width:1px;height:367.08px;background:#d5d6d9"></div>
<div class="a" style="left:1185.9px;top:274.6px;width:1px;height:367.08px;background:#d5d6d9"></div>
<div class="a" style="left:200.9px;top:300.9px;width:22.5px;height:26.2px;border:3px solid #3e66de"></div>
<svg style="left:211.2px;top:309.6px" width="6" height="9.5"><polygon points="0,0 5.4,4.6 0,9.2" fill="#1e1e1e"/></svg>
<div class="a" style="left:5px;top:894.5px;width:1268.5px;height:36px;background:linear-gradient(#e2e3e6,#d6d7dc);border-top:1px solid #c9cace"></div>
<div class="a" style="left:5px;top:929.5px;width:1268.5px;height:1.5px;background:#c2c3c8"></div>
<div class="t" style="left:16.00px;top:906.35px;font-size:14px;font-weight:normal;color:#343434;transform:scaleX(0.9368);transform-origin:0 0;">Open Windows</div>
<svg style="left:110px;top:909.5px" width="8.5" height="5.5"><polygon points="0,0 8.5,0 4.25,5" fill="#1e1e1e"/></svg>
<div class="a" style="left:778.2px;top:900px;width:1px;height:24px;background:#b9bbc0"></div>
<div class="a" style="left:779.2px;top:900px;width:1px;height:24px;background:#f2f2f4"></div>
<div class="a" style="left:895px;top:900px;width:1px;height:24px;background:#b9bbc0"></div>
<div class="a" style="left:896px;top:900px;width:1px;height:24px;background:#f2f2f4"></div>
<div class="a" style="left:987px;top:900px;width:1px;height:24px;background:#b9bbc0"></div>
<div class="a" style="left:988px;top:900px;width:1px;height:24px;background:#f2f2f4"></div>
<div class="a" style="left:1116.7px;top:900px;width:1px;height:24px;background:#b9bbc0"></div>
<div class="a" style="left:1117.7px;top:900px;width:1px;height:24px;background:#f2f2f4"></div>
<div class="t" style="left:790.40px;top:906.35px;font-size:14px;font-weight:normal;color:#343434;transform:scaleX(0.9400);transform-origin:0 0;">User : JulandaK</div>
<div class="t" style="left:906.70px;top:906.35px;font-size:14px;font-weight:normal;color:#343434;transform:scaleX(0.9900);transform-origin:0 0;">12/02/2021</div>
<div class="t" style="left:997.10px;top:906.35px;font-size:14px;font-weight:normal;color:#343434;transform:scaleX(1.0139);transform-origin:0 0;">Version : 2.4.0.11</div>
<div class="t" style="left:1126.80px;top:906.35px;font-size:14px;font-weight:normal;color:#343434;transform:scaleX(0.9347);transform-origin:0 0;">Example Company</div>
<svg style="left:1257px;top:912px" width="14" height="14" viewBox="0 0 14 14"><path d="M0.5 13 L13 0.5 M5.5 13 L13 5.5 M10.5 13 L13 10.5" stroke="#9a9ca2" stroke-width="1.2"/></svg>
<svg style="left:0;top:0" width="1278" height="937" viewBox="0 0 1278 937">
<g fill="#3e66de" stroke="#3e66de">
<path d="M272 18.3 L412 16.3" stroke-width="3.2"/><polygon points="409.5,9.3 427.3,16.2 409.5,23" stroke="none"/>
<path d="M402.5 147 L426 104.5" stroke-width="3.2"/><polygon points="435.2,89.8 432.5,108.4 420.5,102" stroke="none"/>
<path d="M638.5 149.6 L584 134" stroke-width="3.2"/><polygon points="569.4,128.2 588.3,126.5 583.5,140.3" stroke="none"/>
<path d="M222.8 202 L214.4 284" stroke-width="3.1"/><polygon points="207.2,281 220.8,281 212.6,297.3" stroke="none"/>
<path d="M216 683.5 L145 616" stroke-width="3.2"/><polygon points="133.9,608 151.8,615.2 142,625.6" stroke="none"/>
</g></svg>
<div class="circ" style="left:246.0px;top:5.699999999999999px;width:28px;height:28px;line-height:28px">1</div>
<div class="circ" style="left:381.25px;top:145.15px;width:29.5px;height:29.5px;line-height:29.5px">2</div>
<div class="circ" style="left:637.25px;top:141.25px;width:29.5px;height:29.5px;line-height:29.5px">3</div>
<div class="circ" style="left:210.25px;top:174.25px;width:29.5px;height:29.5px;line-height:29.5px">4</div>
<div class="circ" style="left:212.25px;top:677.25px;width:29.5px;height:29.5px;line-height:29.5px">5</div>
</body></html>
